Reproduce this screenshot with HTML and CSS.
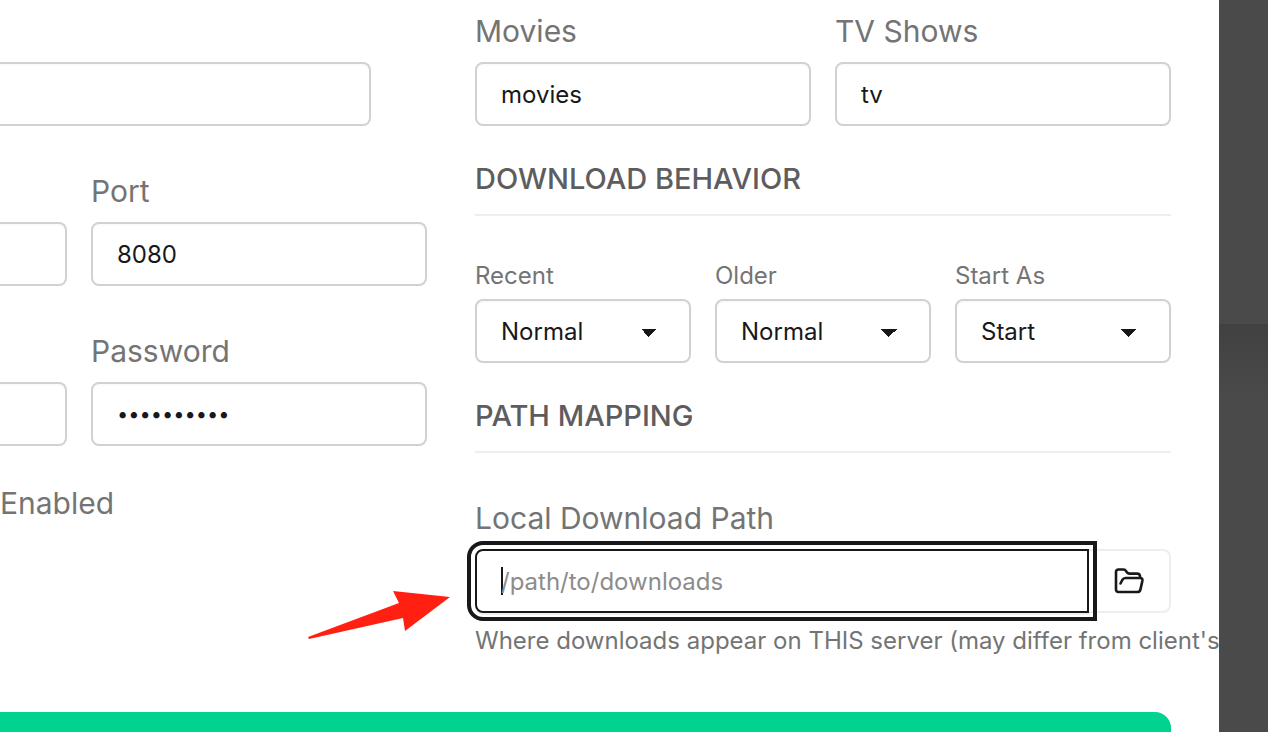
FILE: index.html
```html
<!DOCTYPE html>
<html lang="en">
<head>
  <meta charset="UTF-8">
  <meta name="viewport" content="width=device-width, initial-scale=1.0">
  <title>Download Client</title>
  <link rel="stylesheet" href="styles.css">
</head>
<body>
  <form class="modal">
    <div class="columns">
      <div class="column">
        <div class="field name-field">
          <input class="input cut" type="text" id="name" aria-label="Name">
        </div>
        <div class="host-row">
          <div class="field bare">
            <input class="input cut" type="text" id="host" aria-label="Host">
          </div>
          <div class="field">
            <label for="port">Port</label>
            <input class="input" type="text" id="port" value="8080">
          </div>
        </div>
        <div class="host-row">
          <div class="field bare">
            <input class="input cut" type="text" id="username" aria-label="Username">
          </div>
          <div class="field">
            <label for="password">Password</label>
            <input class="input password" type="password" id="password" value="downloader">
          </div>
        </div>
        <div class="enabled">Enabled</div>
      </div>

      <div class="column">
        <div class="row">
          <div class="field">
            <label for="movies">Movies</label>
            <input class="input" type="text" id="movies" value="movies">
          </div>
          <div class="field">
            <label for="tv">TV Shows</label>
            <input class="input" type="text" id="tv" value="tv">
          </div>
        </div>

        <h3>DOWNLOAD BEHAVIOR</h3>
        <div class="row">
          <div class="field small">
            <label for="recent">Recent</label>
            <select class="input select" id="recent">
              <option>Normal</option>
            </select>
          </div>
          <div class="field small">
            <label for="older">Older</label>
            <select class="input select" id="older">
              <option>Normal</option>
            </select>
          </div>
          <div class="field small">
            <label for="startAs">Start As</label>
            <select class="input select" id="startAs">
              <option>Start</option>
            </select>
          </div>
        </div>

        <h3>PATH MAPPING</h3>
        <div class="field">
          <label for="localPath">Local Download Path</label>
          <div class="join">
            <input class="input path-input" type="text" id="localPath" placeholder="/path/to/downloads">
            <button class="browse" type="button" aria-label="Browse">
              <svg width="32" height="32" viewBox="0 0 32 32" fill="none" stroke="currentColor" stroke-width="2.6" stroke-linecap="round" stroke-linejoin="round">
                <path d="M7.5 18.5 L9.3 15 Q10.4 13 12.5 13 H27 Q29.8 13 29.4 15.8 L27.4 24.6 Q26.8 27 24.5 27 H5.5 Q3 27 3 24.5 V7 Q3 4.5 5.5 4.5 H10.5 Q12.2 4.5 13 6 L14.2 7.7 Q15 8.6 16.3 8.6 H24 Q26.6 8.6 27 11 V12.6"/>
              </svg>
            </button>
            <svg class="pointer" width="144" height="50" viewBox="0 0 144 50">
              <path d="M1 47 L92 13 L86 1 L143 7 L98 41 L96 28 L2 49 Z"/>
            </svg>
          </div>
          <p class="hint">Where downloads appear on THIS server (may differ from client's</p>
        </div>
      </div>
    </div>
    <button class="save" type="submit" aria-label="Save"></button>
  </form>
  <div class="backdrop"></div>
</body>
</html>
```
FILE: styles.css
```css
* {
  box-sizing: border-box;
}
body {
  margin: 0;
  display: flex;
  height: 100vh;
  font-family: Inter, "Liberation Sans", sans-serif;
  font-size: 24px;
  color: #18181b;
  background-color: #fff;
}
.modal {
  flex: 1;
  min-width: 0;
  display: flex;
  flex-direction: column;
  padding: 8px 48px 0 0;
}
.backdrop {
  width: 49px;
  background: linear-gradient(#4a4a4a 324px, #414141 324px, #4a4a4a 400px);
}
.columns {
  display: grid;
  grid-template-columns: 427fr 696fr;
  gap: 48px;
}
.column {
  min-width: 0;
}
.field {
  flex: 1;
  min-width: 0;
}
label {
  display: block;
  font-size: 30px;
  line-height: 46px;
  margin-bottom: 8px;
  color: #747474;
}
.small label {
  font-size: 24px;
  line-height: 36px;
  margin-bottom: 5px;
}
.row {
  display: flex;
  gap: 24px;
}
.host-row {
  display: grid;
  grid-template-columns: 67fr 336fr;
  gap: 24px;
  margin-top: 42px;
}
.name-field {
  padding: 54px 56px 0 0;
}
.bare {
  padding-top: 54px;
}
.input {
  display: block;
  width: 100%;
  height: 64px;
  padding: 0 24px;
  border: 2px solid #d1d1d1;
  border-radius: 8px;
  background-color: #fff;
  box-shadow: inset 0 2px 1px #fbfbfb;
  font: inherit;
  color: #18181b;
}
.cut {
  border-left: 0;
  border-radius: 0 8px 8px 0;
}
.password {
  font-size: 20px;
}
.select {
  appearance: none;
  background-image:
    linear-gradient(45deg, transparent 50%, #18181b 50%),
    linear-gradient(135deg, #18181b 50%, transparent 50%);
  background-size: 8px 8px;
  background-position: right 40px top 28px, right 32px top 28px;
  background-repeat: no-repeat;
}
.enabled {
  margin-top: 42px;
  font-size: 30px;
  line-height: 30px;
  color: #747474;
}
h3 {
  margin: 32px 0 42px;
  padding-bottom: 14px;
  border-bottom: 2px solid #eee;
  font-size: 29px;
  font-weight: 500;
  line-height: 42px;
  color: #5d5d5f;
}
.join {
  display: flex;
  position: relative;
}
.path-input {
  flex: 1;
  min-width: 0;
  position: relative;
  z-index: 1;
  border-color: #18181b;
  border-radius: 8px 0 0 8px;
  outline: 4px solid #18181b;
  outline-offset: 4px;
  box-shadow: 0 2px 0 #eee;
  /* text caret */
  background-image: linear-gradient(#18181b, #18181b);
  background-size: 2px 28px;
  background-position: 24px center;
  background-repeat: no-repeat;
}
.path-input::placeholder {
  color: #8c8c8d;
}
.browse {
  width: 82px;
  height: 64px;
  padding: 0;
  border: 2px solid #eee;
  border-left: 0;
  border-radius: 0 8px 8px 0;
  background-color: #fff;
  color: #18181b;
}
.browse svg {
  display: block;
  margin: 0 auto;
}
.pointer {
  position: absolute;
  left: -168px;
  top: 41px;
  fill: #ff2012;
}
.hint {
  margin: 8px 0 0;
  line-height: 40px;
  white-space: nowrap;
  color: #747474;
}
.save {
  flex: 1;
  width: 100%;
  margin-top: 51px;
  padding: 0;
  border: 0;
  border-radius: 0 16px 0 0;
  background-color: #00d390;
}
```
